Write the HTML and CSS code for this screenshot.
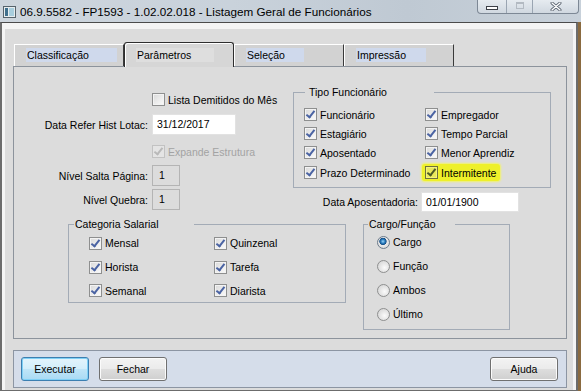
FILE: index.html
```html
<!DOCTYPE html>
<html lang="pt">
<head>
<meta charset="utf-8">
<title>Listagem Geral de Funcionários</title>
<link rel="stylesheet" href="styles.css">
</head>
<body>
<header class="titlebar">
  <svg class="appicon" width="13" height="12" viewBox="0 0 13 12">
    <rect x="0.5" y="0.5" width="12" height="11" fill="#e6ecef" stroke="#56636c"/>
    <rect x="2" y="2" width="3" height="8" fill="#3f6f8c"/>
    <rect x="6" y="2" width="5" height="8" fill="#a8cede"/>
  </svg>
  <span class="title">06.9.5582 - FP1593 - 1.02.02.018 - Listagem Geral de Funcionários</span>
  <div class="wctrls">
    <span class="wbtn wmin"><span class="glyph-min"></span></span>
    <span class="wbtn wmax"><span class="glyph-max"></span></span>
    <span class="wbtn wclose">
      <svg width="12" height="9" viewBox="0 0 12 9">
        <path d="M2 1 L10 8 M10 1 L2 8" stroke="#5b6470" stroke-width="3" stroke-linecap="round"/>
        <path d="M2 1 L10 8 M10 1 L2 8" stroke="#ffffff" stroke-width="1.3" stroke-linecap="round"/>
      </svg>
    </span>
  </div>
</header>
<div class="frame">
  <div class="dialog">
    <div class="tabs">
      <div class="tab"><span class="tablabel w91">Classificação</span></div>
      <div class="tab active"><span class="tablabel w78">Parâmetros</span></div>
      <div class="tab"><span class="tablabel w58">Seleção</span></div>
      <div class="tab"><span class="tablabel w70">Impressão</span></div>
    </div>
    <div class="panel">
      <div class="top">
        <div class="form">
          <div class="frow r1"><span class="lbl"></span><span class="chk"><span class="cb"></span>Lista Demitidos do Mês</span></div>
          <div class="frow r2"><span class="lbl">Data Refer Hist Lotac:</span><span class="field wdate">31/12/2017</span></div>
          <div class="frow r3"><span class="lbl"></span><span class="chk disabled"><span class="cb on"></span>Expande Estrutura</span></div>
          <div class="frow r4"><span class="lbl">Nível Salta Página:</span><span class="field num">1</span></div>
          <div class="frow r5"><span class="lbl">Nível Quebra:</span><span class="field num">1</span></div>
        </div>
        <div class="rightcol">
          <fieldset class="group g-tipo">
            <legend class="lg-tipo">Tipo Funcionário</legend>
            <div class="opts tipo">
              <span class="chk"><span class="cb on"></span>Funcionário</span>
              <span class="chk"><span class="cb on"></span>Empregador</span>
              <span class="chk"><span class="cb on"></span>Estagiário</span>
              <span class="chk"><span class="cb on"></span>Tempo Parcial</span>
              <span class="chk"><span class="cb on"></span>Aposentado</span>
              <span class="chk"><span class="cb on"></span>Menor Aprendiz</span>
              <span class="chk"><span class="cb on"></span>Prazo Determinado</span>
              <span class="chk hl"><span class="cb on"></span>Intermitente</span>
            </div>
          </fieldset>
          <div class="frow apos"><span class="lbl">Data Aposentadoria:</span><span class="field wapos">01/01/1900</span></div>
        </div>
      </div>
      <div class="bottom">
        <fieldset class="group g-cat">
          <legend class="lg-cat">Categoria Salarial</legend>
          <div class="opts cat">
            <span class="chk"><span class="cb on"></span>Mensal</span>
            <span class="chk"><span class="cb on"></span>Quinzenal</span>
            <span class="chk"><span class="cb on"></span>Horista</span>
            <span class="chk"><span class="cb on"></span>Tarefa</span>
            <span class="chk"><span class="cb on"></span>Semanal</span>
            <span class="chk"><span class="cb on"></span>Diarista</span>
          </div>
        </fieldset>
        <fieldset class="group g-cargo">
          <legend class="lg-cargo">Cargo/Função</legend>
          <div class="radios">
            <span class="rad"><span class="rb on"></span>Cargo</span>
            <span class="rad"><span class="rb"></span>Função</span>
            <span class="rad"><span class="rb"></span>Ambos</span>
            <span class="rad"><span class="rb"></span>Último</span>
          </div>
        </fieldset>
      </div>
    </div>
    <div class="footer">
      <button class="btn default">Executar</button>
      <button class="btn">Fechar</button>
      <span class="spacer"></span>
      <button class="btn">Ajuda</button>
    </div>
  </div>
</div>
</body>
</html>
```
FILE: styles.css
```css
* { box-sizing: border-box; }
html, body { margin: 0; padding: 0; }
body {
  width: 581px;
  height: 391px;
  overflow: hidden;
  background: #8a6a40;
  font-family: "Liberation Sans", Arial, sans-serif;
  font-size: 10.5px;
  color: #000;
}

/* title bar */
.titlebar {
  height: 22px;
  display: flex;
  align-items: center;
  background: linear-gradient(90deg, #cdd5dd 0%, #c9d2db 40%, #bfc9d3 70%, #c8d1da 100%);
}
.appicon { margin-left: 3px; margin-top: 1px; flex: none; }
.title {
  margin-left: 4px;
  font-size: 11.7px;
  color: #000;
  white-space: nowrap;
}
.wctrls {
  margin-left: auto;
  margin-right: 2px;
  align-self: flex-start;
  display: flex;
  height: 14px;
  border: 1px solid #7d8895;
  border-top: 0;
  border-radius: 0 0 4px 4px;
  overflow: hidden;
  background: linear-gradient(#e6ebf0, #d0d8e0);
}
.wbtn {
  width: 29px;
  display: flex;
  align-items: center;
  justify-content: center;
  border-right: 1px solid #9aa5b2;
}
.wmax { width: 26px; }
.wclose { width: 45px; border-right: 0; }
.glyph-min {
  width: 12px; height: 4px;
  border: 1px solid #3c4048;
  background: #fff;
  margin-top: 2px;
}
.glyph-max {
  width: 8px; height: 7px;
  border: 1px solid #b3bac2;
  border-top-width: 2px;
  margin-top: -2px;
}

/* window frame */
.frame {
  width: 578px;
  height: 369px;
  border-top: 1px solid #4b4b4b;
  border-left: 2px solid #6c6c6c;
  border-right: 2px solid #6c6c6c;
  border-bottom: 1px solid #6c6c6c;
  padding: 6px 3px 1px 3px;
  background: #f4f4f4;
}
.dialog {
  width: 568px;
  height: 361px;
  background: #dcdcdc;
  padding: 13px 6px 0 8px;
}

/* tabs */
.tabs {
  display: flex;
  align-items: flex-end;
  height: 24px;
  padding-left: 1px;
  position: relative;
  z-index: 1;
}
.tab {
  width: 110px;
  height: 22px;
  background: #d2d2d2;
  border-top: 1px solid #fff;
  border-left: 1px solid #fff;
  border-right: 1px solid #3a3a3a;
  padding: 3px 0 0 11px;
}
.tab.active {
  height: 25px;
  margin-bottom: -1px;
  background: #d6d6d6;
  border: 1px solid #2e2e2e;
  border-bottom: 0;
  border-radius: 3px 3px 0 0;
  box-shadow: inset 1px 1px 0 #ffffff;
  padding-top: 5px;
}
.tablabel {
  display: block;
  height: 14px;
  line-height: 14px;
  padding-left: 1px;
  background: #cfd9ec;
  white-space: nowrap;
}
.tab.active .tablabel { background: #dedede; }
.w91 { width: 91px; }
.w78 { width: 78px; }
.w58 { width: 58px; }
.w70 { width: 70px; }

/* panel */
.panel {
  height: 273px;
  border: 1px solid #8c939c;
  background: #dcdcdc;
}
.top { display: flex; }
.form { width: 279px; flex: none; }
.frow { display: flex; align-items: center; }
.lbl {
  width: 134px;
  flex: none;
  text-align: right;
  margin-right: 4px;
  white-space: nowrap;
}
.r1 { margin-top: 26px; height: 13px; }
.r2 { margin-top: 8px; height: 21px; }
.r3 { margin-top: 10px; height: 13px; }
.r4 { margin-top: 7px; height: 21px; }
.r5 { margin-top: 3px; height: 21px; }

.field {
  height: 21px;
  line-height: 19px;
  padding-left: 4px;
  background: #fff;
  border: 1px solid #e2e2e2;
  white-space: nowrap;
}
.wdate { width: 84px; }
.num {
  width: 28px;
  padding-left: 6px;
  background: #dcdcdc;
  border: 1px solid #b4b4b4;
}
.rightcol { width: 258px; flex: none; }
.apos { margin-top: 4px; }
.apos .lbl { width: 125px; margin-right: 3px; }
.wapos { width: 98px; height: 20px; line-height: 18px; }

/* group boxes */
.group {
  margin: 0;
  padding: 0;
  min-width: 0;
  border: 1px solid #a3abb6;
}
.group legend {
  padding: 0 0 0 1px;
  height: 14px;
  line-height: 14px;
  font-size: 10.5px;
  text-align: left;
  white-space: nowrap;
}
.g-tipo { margin-top: 18px; width: 258px; }
.lg-tipo { margin-left: 11px; width: 129px; padding-left: 4px !important; }
.g-cat { margin-left: 54px; width: 278px; }
.lg-cat { margin-left: 5px; width: 120px; }
.g-cargo { margin-left: 17px; width: 147px; }
.lg-cargo { margin-left: 4px; width: 87px; }

.opts { display: grid; }
.tipo {
  grid-template-columns: 121px auto;
  grid-template-rows: 19px 19px 19px 21px;
  padding: 6px 0 4px 10px;
}
.cat {
  grid-template-columns: 125px auto;
  grid-template-rows: 24px 24px 23px;
  padding-left: 20px;
}
.bottom { display: flex; align-items: flex-start; margin-top: 5px; }

.chk, .rad {
  display: flex;
  align-items: center;
  gap: 3px;
  white-space: nowrap;
}
.opts .chk { align-self: center; justify-self: start; }

.cb {
  flex: none;
  width: 13px;
  height: 13px;
  display: inline-flex;
  align-items: center;
  justify-content: center;
  border: 1px solid #8e8f8f;
  background: linear-gradient(135deg, #d9d9d9 0%, #eeeeee 60%, #fbfbfb 100%);
  box-shadow: inset 0 0 0 1px #f3f3f3;
}
.cb.on::after {
  content: "";
  width: 3px;
  height: 7px;
  border: solid #4a63a3;
  border-width: 0 2px 2px 0;
  transform: translate(0, -1px) rotate(38deg);
}
.chk.disabled { color: #a3a3a3; }
.chk.disabled .cb { border-color: #c2c2c2; background: #e4e4e4; box-shadow: none; }
.chk.disabled .cb.on::after { border-color: #b9b9b9; }

.chk.hl {
  background: #eef02a;
  margin: 0 -3px;
  padding: 2px 4px 2px 3px;
  border-radius: 3px;
  box-shadow: 0 0 2px 1px #f2f36a;
}
.chk.hl .cb {
  border-color: #6f6f3c;
  background: #e9e85a;
  box-shadow: inset 0 0 0 1px #f3f37a;
}
.chk.hl .cb.on::after { border-color: #4c5a24; }

.radios {
  display: grid;
  grid-template-rows: repeat(4, 24px);
  margin-top: -1px;
  padding: 0 0 3px 13px;
}
.rb {
  flex: none;
  width: 13px;
  height: 13px;
  border-radius: 50%;
  border: 1px solid #8e8f8f;
  background: radial-gradient(circle at 60% 60%, #fbfbfb 0, #e6e6e6 45%, #cfcfcf 100%);
}
.rb.on {
  border-color: #6b7a8a;
  background: radial-gradient(circle at 45% 40%, #9ad4f5 0, #2a7dc0 2px, #164f86 3.3px, #e9e9e9 4px, #d0d0d0 100%);
}

/* footer */
.footer {
  margin-top: 11px;
  height: 38px;
  display: flex;
  align-items: center;
  padding: 0 8px 0 7px;
  border: 1px solid #8c95a3;
  background: #d5ddea;
}
.spacer { flex: 1; }
.btn {
  width: 68px;
  height: 24px;
  margin: 0;
  padding: 0;
  font-family: "Liberation Sans", Arial, sans-serif;
  font-size: 10.5px;
  color: #000;
  border: 1px solid #707070;
  border-radius: 3px;
  background: linear-gradient(#f3f3f3 0%, #ebebeb 48%, #dddddd 52%, #cfcfcf 100%);
  box-shadow: inset 0 0 0 1px #fbfbfb;
}
.btn + .btn { margin-left: 10px; }
.btn.default {
  border-color: #3c7fb1;
  background: linear-gradient(#e4f4fc 0%, #d3eefb 48%, #bfe5f8 52%, #a9daf4 100%);
  box-shadow: inset 0 0 0 1px #7fd0f6;
}
```
